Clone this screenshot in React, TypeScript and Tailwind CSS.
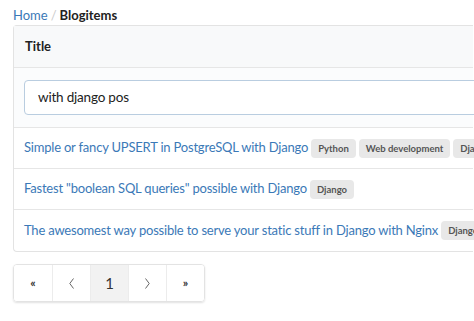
const rows = [
  { title: "Simple or fancy UPSERT in PostgreSQL with Django", tags: ["Python", "Web development", "Django"] },
  { title: 'Fastest "boolean SQL queries" possible with Django', tags: ["Django"] },
  { title: "The awesomest way possible to serve your static stuff in Django with Nginx", tags: ["Django"] },
]

function Tag({ name }: { name: string }) {
  return (
    <span className="ml-[3px] inline-block shrink-0 whitespace-nowrap rounded-[4px] bg-[#e8e8e8] px-[7px] py-[4px] text-[9.5px] font-bold leading-[11px] text-[#555]">
      {name}
    </span>
  )
}

function Chevron({ dir }: { dir: "left" | "right" }) {
  return (
    <svg width="5" height="11" viewBox="0 0 5 11" fill="none" stroke="#666" strokeWidth="1">
      {dir === "left" ? <polyline points="4.5,0.5 0.8,5.5 4.5,10.5" /> : <polyline points="0.5,0.5 4.2,5.5 0.5,10.5" />}
    </svg>
  )
}

export default function App() {
  return (
    <div className="h-[321px] w-[474px] overflow-hidden bg-white pl-[13px] pt-[6px] font-['Lato',sans-serif] text-[#222]">
      <nav className="text-[13px] leading-[19px]">
        <a className="text-[#3b79b7]">Home</a>
        <span className="px-[3px] text-[#ccc]">/</span>
        <span className="font-bold">Blogitems</span>
      </nav>

      <div className="w-[460px] rounded-l-[4px] border border-r-0 border-[#e3e3e3]">
        <div className="flex h-[42px] items-center border-b border-[#e6e6e6] bg-[#f8f9fa] px-[11px] text-[13px] font-bold">
          Title
        </div>
        <div className="border-b border-[#e6e6e6] bg-[#fbfcfd] py-[12px] pl-[10px]">
          <div className="flex h-[35px] w-[480px] items-center rounded-[4px] border border-[#b9cde0] bg-white px-[13px] text-[13.5px] tracking-[-0.2px] text-[#222]">
            with django pos
          </div>
        </div>
        {rows.map((r, i) => (
          <div
            key={r.title}
            className={`flex h-[41px] items-center whitespace-nowrap pl-[10px] ${i < rows.length - 1 ? "border-b border-[#e6e6e6]" : ""}`}
          >
            <span className="shrink-0 text-[13px] tracking-[-0.2px] text-[#3b79b7]">{r.title}</span>
            {r.tags.map((t) => (
              <Tag key={t} name={t} />
            ))}
          </div>
        ))}
      </div>

      <div className="mt-[12px] flex w-fit overflow-hidden rounded-[4px] border border-[#e3e3e3] shadow-[0_1px_2px_rgba(0,0,0,0.12)]">
        {["«", "left", "1", "right", "»"].map((p, i) => (
          <div
            key={i}
            className={`flex h-[36px] w-[38px] items-center justify-center text-[#333] ${i > 0 ? "border-l border-[#ececec]" : ""} ${p === "1" ? "bg-[#f2f2f2] text-[15px]" : "bg-white text-[12px] font-bold"}`}
          >
            {p === "left" || p === "right" ? <Chevron dir={p} /> : p}
          </div>
        ))}
      </div>
    </div>
  )
}
